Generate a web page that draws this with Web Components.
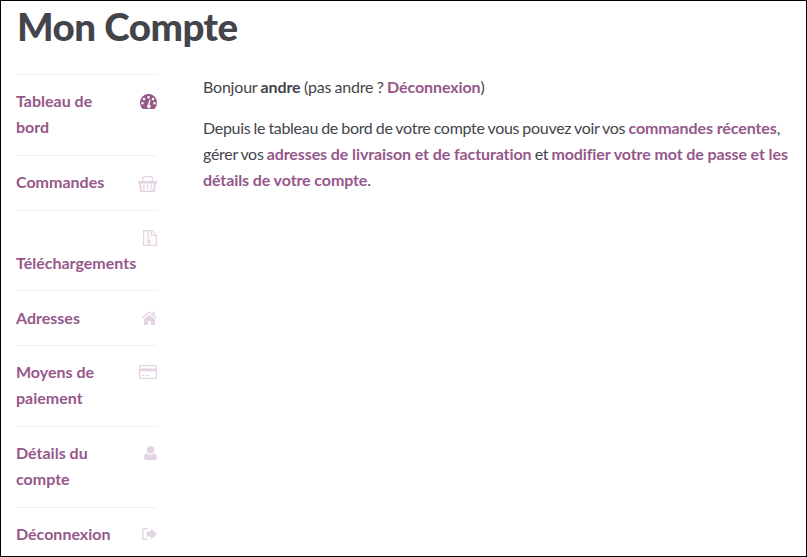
<!DOCTYPE html>
<html lang="fr">
<head>
<meta charset="utf-8">
<style>
  html, body { margin: 0; height: 100%; }
  body { overflow: hidden; background: #fff; font-family: Lato, "Noto Sans", sans-serif; }
  p { margin: 0 0 15.500px; }
  p.hello { letter-spacing: -.2px; word-spacing: -.5px; }
</style>
</head>
<body>
<account-page>
  <account-nav slot="nav">
    <nav-item icon="gauge">Tableau de bord</nav-item>
    <nav-item icon="basket">Commandes</nav-item>
    <nav-item icon="file" drop>Téléchargements</nav-item>
    <nav-item icon="home">Adresses</nav-item>
    <nav-item icon="card">Moyens de paiement</nav-item>
    <nav-item icon="user">Détails du compte</nav-item>
    <nav-item icon="logout">Déconnexion</nav-item>
  </account-nav>
  <p class="hello">Bonjour <acc-strong>andre</acc-strong> (pas andre ? <acc-link>Déconnexion</acc-link>)</p>
  <p>Depuis le tableau de bord de votre compte vous pouvez voir vos <acc-link>commandes récentes</acc-link>, gérer vos <acc-link>adresses de livraison et de facturation</acc-link> et <acc-link>modifier votre mot de passe et les détails de votre compte</acc-link>.</p>
</account-page>
<script>
  const ICONS = {
    gauge: [17, 15, '0 0 17 15', '<path fill-rule="evenodd" d="M8.500 0A8.500 8.500 0 0 0 0 8.500c0 2.300.8 4.300 2 5.800.3.400.6.700 1 .700h11c.4 0 .7-.3 1-.7 1.200-1.500 2-3.500 2-5.800A8.500 8.500 0 0 0 8.500 0zM8.500 2a1.300 1.300 0 1 1 0 2.600 1.300 1.300 0 0 1 0-2.600zM4 3.800a1.300 1.300 0 1 1 0 2.600 1.300 1.300 0 0 1 0-2.600zm9 0a1.300 1.300 0 1 1 0 2.600 1.300 1.300 0 0 1 0-2.600zM2.500 8a1.300 1.300 0 1 1 0 2.600 1.300 1.300 0 0 1 0-2.600zm12 0a1.300 1.300 0 1 1 0 2.600 1.300 1.300 0 0 1 0-2.600zM9.400 5.500l1.100.3-1 4.900a1.800 1.800 0 1 1-1.500.1z"/>'],
    basket: [19, 17, '0 0 19 17', '<path fill-rule="evenodd" d="M4 6V3.500A2.500 2.500 0 0 1 6.500 1h6A2.500 2.500 0 0 1 15 3.500V6h-1.300V3.500c0-.7-.5-1.200-1.200-1.200h-6c-.7 0-1.200.5-1.200 1.200V6zM0 6h19v2.500h-1L16.800 17H2.200L1 8.500H0zM3 8.500l.9 7h11.200l.9-7zM5.200 9.500h1.300v5H5.200zm3.600 0h1.400v5H8.800zm3.700 0h1.300v5h-1.300z"/>'],
    file: [14, 16, '0 0 14 16', '<path fill-rule="evenodd" d="M0 0h9l5 5v11H0zm1.200 1.200v13.600h11.600V6H8V1.200zM9.200 1.600v3.200h3.200zM4 1.500h1.500V3H4zM5.500 3H7v1.500H5.500zM4 4.500h1.500V6H4zM5.500 6H7v1.500H5.500zM4 7.500h1.500V9H4zM4 9.500h3l.5 3a1.500 1.500 0 1 1-3.500 0zm1.500 2.400a.7.7 0 1 0 0 1.400.7.7 0 0 0 0-1.400z"/>'],
    home: [15, 14, '0 0 15 14', '<path d="M7.500 0 0 6.400l.9 1L7.500 1.800l6.600 5.600.9-1-2.500-2.200V.7h-2v2.800L7.500 0zM2 8.200V14h4v-4h3v4h4V8.200L7.500 3.400z"/>'],
    card: [18, 14, '0 0 18 14', '<path fill-rule="evenodd" d="M1.500 0h15A1.500 1.500 0 0 1 18 1.500v11a1.500 1.500 0 0 1-1.500 1.500h-15A1.500 1.500 0 0 1 0 12.500v-11A1.500 1.500 0 0 1 1.500 0zM1.300 1.300v2.200h15.400V1.300zm0 5v6.400h15.400V6.300zM2.700 10h2.500v1H2.700zm3.800 0H10v1H6.500z"/>'],
    user: [13, 14, '0 0 13 14', '<path d="M6.500 0a3.500 3.500 0 1 1 0 7.500 3.500 3.500 0 0 1 0-7.500zM3 7.200c1 1 2.200 1.500 3.500 1.500s2.500-.5 3.500-1.500c1.900.2 3 1.700 3 4.300 0 1.500-.9 2.500-2.300 2.500H2.300C.9 14 0 13 0 11.500 0 8.900 1.100 7.400 3 7.200z"/>'],
    logout: [15, 14, '0 0 15 14', '<path d="M5.500 1v1.500H2.800c-.7 0-1.300.6-1.300 1.300v6.400c0 .7.600 1.300 1.300 1.300h2.700V13H2.800A2.800 2.800 0 0 1 0 10.200V3.800A2.800 2.800 0 0 1 2.800 1zM9 1.500l6 5.500-6 5.500V9.500H4.500v-5H9z"/>']
  };

  class AccountPage extends HTMLElement {
    constructor() {
      super();
      this.attachShadow({ mode: 'open' }).innerHTML = `
        <style>
          :host { display: block; height: 557px; box-sizing: border-box; border: 1px solid #000; overflow: hidden;
            padding: 0 15px; color: #43454b; font-size: 16px; line-height: 1.618; }
          h1 { margin: 0 0 0 1px; padding-top: 3px; height: 73px; box-sizing: border-box; font-size: 38.500px; line-height: 45px; font-weight: 900; letter-spacing: -.5px; }
          .cols { display: grid; grid-template-columns: 141px 1fr; column-gap: 46px; }
          main { letter-spacing: -.3px; word-spacing: -.6px; }
        </style>
        <h1>Mon Compte</h1>
        <div class="cols">
          <slot name="nav"></slot>
          <main><slot></slot></main>
        </div>`;
    }
  }

  class AccountNav extends HTMLElement {
    constructor() {
      super();
      this.attachShadow({ mode: 'open' }).innerHTML = `
        <style>:host { display: block; border-top: 1px solid rgba(0,0,0,.06); }</style>
        <slot></slot>`;
    }
  }

  class NavItem extends HTMLElement {
    constructor() {
      super();
      const [w, h, box, body] = ICONS[this.getAttribute('icon')];
      this.attachShadow({ mode: 'open' }).innerHTML = `
        <style>
          :host { display: block; border-bottom: 1px solid rgba(0,0,0,.06); color: #96588a; font-weight: 700; }
          .row { display: flex; justify-content: space-between; align-items: flex-start; padding: 13.200px 0 14.800px; gap: 20px; }
          :host([drop]) .row { display: block; position: relative; padding-top: 39.088px; }
          svg { flex: none; fill: #96588a; opacity: .25; margin-top: 6px; }
          :host([icon=gauge]) svg { opacity: 1; }
          :host([drop]) svg { position: absolute; right: 0; top: 13px; }
        </style>
        <div class="row"><span><slot></slot></span>
          <svg width="${w}" height="${h}" viewBox="${box}">${body}</svg>
        </div>`;
    }
  }

  class AccLink extends HTMLElement {
    constructor() {
      super();
      this.attachShadow({ mode: 'open' }).innerHTML = `
        <style>:host { color: #96588a; font-weight: 700; letter-spacing: -.1px; word-spacing: 0; }</style><slot></slot>`;
    }
  }

  class AccStrong extends HTMLElement {
    constructor() {
      super();
      this.attachShadow({ mode: 'open' }).innerHTML = `
        <style>:host { font-weight: 700; letter-spacing: -.1px; }</style><slot></slot>`;
    }
  }

  customElements.define('account-page', AccountPage);
  customElements.define('account-nav', AccountNav);
  customElements.define('nav-item', NavItem);
  customElements.define('acc-link', AccLink);
  customElements.define('acc-strong', AccStrong);
</script>
</body>
</html>
